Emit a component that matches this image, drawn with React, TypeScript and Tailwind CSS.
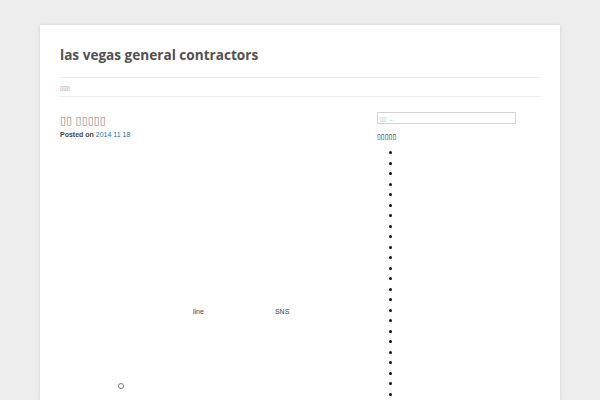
const tofu = (n: number) => '\u25AF'.repeat(n);

export default function App() {
  const bullets = Array.from({ length: 24 }, (_, i) => i);

  return (
    <div className="min-h-[400px] bg-[#ededed] pt-[25px] font-['Open_Sans',sans-serif]">
      <div className="mx-[40px] h-[375px] overflow-hidden bg-white px-[20px] shadow-[0_0_3px_rgba(0,0,0,0.12)]">
        {/* Header */}
        <h1 className="pt-[19px] text-[13.6px] font-bold leading-[22px] text-[#515151]">
          las vegas general contractors
        </h1>
        <nav className="mt-[11px] flex h-[20px] items-center border-y border-[#ededed] text-[6px] text-[#777]">
          <span className="font-['DejaVu_Sans',sans-serif]">{tofu(3)}</span>
        </nav>

        <div className="flex">
          {/* Content */}
          <main className="w-[280px] shrink-0 pt-[18px]">
            <h2 className="font-['DejaVu_Sans',sans-serif] text-[11px] leading-[12px] text-[#888]">
              {tofu(2)} {tofu(5)}
            </h2>
            <p className="mt-[3px] font-['Liberation_Sans',sans-serif] text-[7px] leading-[9px]">
              <span className="font-bold text-[#444]">Posted on</span>{' '}
              <span className="text-[#21759b]">2014 11 18</span>
            </p>
            <div className="mt-[168px] flex font-['Liberation_Sans',sans-serif] text-[7px] text-[#444]">
              <span className="ml-[133px]">line</span>
              <span className="ml-[71px]">SNS</span>
            </div>
            <div className="ml-[58px] mt-[65px] h-[6px] w-[6px] rounded-full border border-[#777]" />
          </main>

          {/* Sidebar */}
          <aside className="ml-[37px] flex-1 pt-[15px]">
            <div className="flex h-[12px] w-[139px] items-center border border-[#d4d4d4] px-[2px] font-['DejaVu_Sans',sans-serif] text-[6px] text-[#aaa]">
              {tofu(2)} …
            </div>
            <h3 className="mt-[9px] font-['DejaVu_Sans',sans-serif] text-[7px] leading-[8px] text-black">
              {tofu(5)}
            </h3>
            <ul className="mt-[10px] flex flex-col gap-[7.5px] pl-[12px]">
              {bullets.map(i => (
                <li key={i} className="h-[3px] w-[3px] rounded-full bg-[#111]" />
              ))}
            </ul>
          </aside>
        </div>
      </div>
    </div>
  );
}
